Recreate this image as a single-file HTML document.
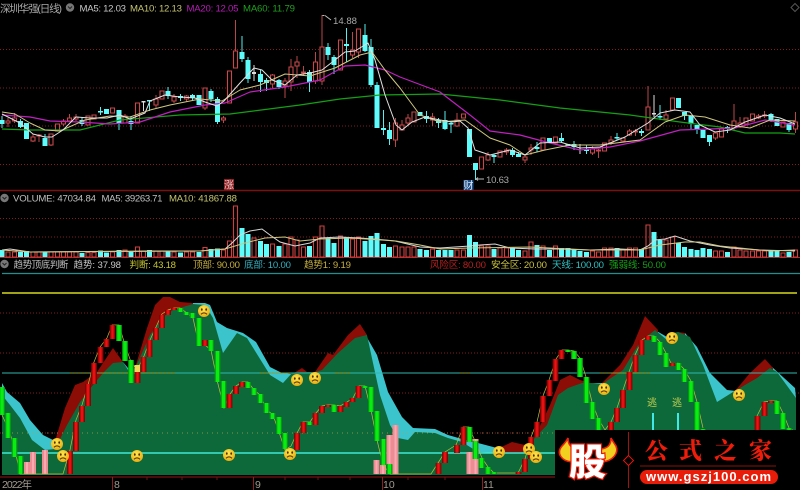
<!DOCTYPE html>
<html><head><meta charset="utf-8"><style>
html,body{margin:0;padding:0;background:#000;width:800px;height:490px;overflow:hidden}
svg{display:block;filter:blur(.35px)}
text{font-family:"Liberation Sans","Noto Sans CJK SC",sans-serif;font-size:9.6px}
</style></head><body>
<svg width="800" height="490" viewBox="0 0 800 490" xmlns="http://www.w3.org/2000/svg">
<defs>
<radialGradient id="fg" cx=".45" cy=".35" r=".7"><stop offset="0" stop-color="#ffe850"/><stop offset="1" stop-color="#e8a80c"/></radialGradient>
<g id="sad"><circle r="6" fill="url(#fg)"/><ellipse cx="-2.2" cy="-1.5" rx=".9" ry="1.3" fill="#4a2808"/><ellipse cx="2.2" cy="-1.5" rx=".9" ry="1.3" fill="#4a2808"/><path d="M-3 3.2Q0 .6 3 3.2" fill="none" stroke="#4a2808" stroke-width="1"/></g>
<path id="gb" d="M2 387V415M8 413V438M14.5 438V457M20.5 456V474M119 325V341M125 341V361M131 360V383M180.5 308V312M186.5 312V315M192.5 313V318M199 318V346M211 340V351M217.5 351V382M223.5 381V408M248 382V388M254 388V395M260.5 394V403M266.5 403V413M272.5 413V419M279 417V434M285 433V449M309.5 422V425M334 405V412M365 386V388M371 387V412M377 411V441M383.5 439V465M389.5 464V474M469.5 427V442M475.5 441V459M481.5 458V468M488 467V474M494 472V474M568 350V352M574 351V359M580 358V377M586.5 377V403M592.5 402V419M598.5 418V432M654 336V342M660 342V355M666 353V367M678.5 363V370M684.5 369V382M691 381V402M697 402V432M703 429V432M777 401V414M783 413V429M789 428V432"/>
<path id="rb" d="M70 451V474M76 422V451M82 406V422M88 384V406M94 363V384M100.5 347V363M106.5 339V347M112.5 325V339M137.5 372V383M143.5 357V372M149.5 340V357M156 328V340M162 315V328M168 310V315M174 308V310M205 340V346M229.5 394V408M236 386V394M242 382V387M297 433V450M303.5 422V433M315.5 413V425M322 406V413M328 405V407M340.5 406V412M346.5 402V407M352.5 398V402M358.5 386V398M438.5 463V474M445 452V463M457 445V453M463.5 427V445M518.5 472V474M525 459V472M531 437V459M537 422V437M543 396V422M549.5 380V396M555.5 359V381M561.5 350V359M611 422V432M617 408V422M623 390V408M629.5 372V390M635.5 355V372M641.5 340V355M648 336V340M672.5 363V366M757.5 416V432M764.5 402V416M771 401V403"/>
</defs>
<rect width="800" height="490" fill="#000"/>

<!-- grid -->
<g stroke="#8a1c1c" stroke-width="1" stroke-dasharray="1 2" fill="none">
<path d="M0 49.5H800M0 88H800M0 126H800M0 164.5H800M0 218.5H800M0 237H800M0 313H800M0 353H800M0 393H800M0 433H800"/>
</g>
<path d="M0 190.5H800" stroke="#7a1010" stroke-width="1.5"/>
<path d="M0 257.5H800" stroke="#c02020" stroke-width="1"/>

<!-- price wicks -->
<g fill="none" stroke-width="1">
<path stroke="#b84848" d="M8 118V127M14.5 113V123M33 134V142M39 134V142M51 134V146M63.5 119V126M69.5 114V122M76 114V121M125 114V123M156 95V108M174 94V103M186.5 95V102M205 88V110M223.5 116V123M235.5 20V68M272.5 74V88M285 78V98M291 59V91M297 56V78M303.5 66V75M315.5 52V84M322 15V85M352.5 32V58M358.5 29V58M395.5 118V147M402 120V130M408 114V125M432.5 113V126M457 113V127M488 152V161M506.5 148V155M525 154V163M531 144V155M592.5 146V155M598.5 149V158M611 136V145M629.5 129V136M635.5 129V136M648 86V130M666 110V120M715.5 133V140M734 104V130M740 117V128M758.5 114V119M764.5 111V118M795.5 112V133"/>
<path stroke="#55eeee" d="M2 116V128M20.5 119V128M45 134V146M82 117V126M100.5 107V115M119 110V130M131 116V130M149.5 100V111M168 87V99M180.5 94V101M192.5 94V101M211 89V102M217.5 97V124M242 36V62M248 57V83M260.5 70V92M266.5 78V91M279 79V89M309.5 70V92M328 43V60M334 55V74M346.5 28V62M365 24V52M371 39V87M377 82V128M383.5 110V135M389.5 122V145M426.5 111V123M438.5 118V128M445 111V130M451 121V133M475.5 170V180M494 154V163M512.5 148V157M518.5 152V157M537 142V152M561.5 133V142M574 141V150M586.5 145V154M617 133V140M641.5 129V136M660 105V120M684.5 112V120M691 116V129M697 125V134M709.5 135V146M727.5 126V133M771 113V122M789 123V132"/>
<path stroke="#dddddd" d="M143.5 101V111M254 65V81M580 144V154M654 95V117"/>
</g>
<!-- price red hollow bodies -->
<path fill="#000" stroke="#c8484c" stroke-width="1.1" d="M6 121h4V123h-4zM12.5 118h4V121h-4zM31 137h4V141h-4zM37 135h4V136h-4zM49 134h4V145h-4zM55.5 124h4V131h-4zM61.5 121h4V124h-4zM67.5 118h4V121h-4zM74 117h4V119h-4zM86 116h4V125h-4zM92 115h4V119h-4zM110.5 108h4V113h-4zM123 116h4V123h-4zM135.5 103h4V123h-4zM154 99h4V105h-4zM160 91h4V99h-4zM172 97h4V101h-4zM184.5 96h4V99h-4zM203 88h4V108h-4zM221.5 118h4V120h-4zM227.5 71h4V103h-4zM233.5 51h4V68h-4zM270.5 75h4V84h-4zM283 81h4V86h-4zM289 67h4V82h-4zM295 62h4V66h-4zM301.5 72h4V73h-4zM313.5 62h4V81h-4zM320 47h4V81h-4zM338.5 40h4V70h-4zM350.5 50h4V55h-4zM356.5 29h4V52h-4zM393.5 123h4V140h-4zM400 125h4V130h-4zM406 118h4V123h-4zM412 112h4V122h-4zM430.5 117h4V120h-4zM455 120h4V126h-4zM461.5 114h4V118h-4zM479.5 157h4V169h-4zM486 155h4V160h-4zM498 151h4V157h-4zM504.5 150h4V152h-4zM523 157h4V160h-4zM529 148h4V150h-4zM541 138h4V150h-4zM553.5 137h4V143h-4zM590.5 149h4V153h-4zM596.5 150h4V151h-4zM602.5 143h4V151h-4zM609 140h4V143h-4zM621 138h4V141h-4zM627.5 131h4V135h-4zM633.5 131h4V132h-4zM646 107h4V130h-4zM664 115h4V119h-4zM670.5 98h4V110h-4zM713.5 133h4V138h-4zM719.5 129h4V137h-4zM732 121h4V128h-4zM738 123h4V127h-4zM744 118h4V124h-4zM750.5 114h4V121h-4zM756.5 116h4V118h-4zM762.5 115h4V116h-4zM781 122h4V127h-4zM793.5 122h4V129h-4z"/>
<!-- price cyan bodies -->
<path fill="none" stroke="#5ffcfc" stroke-width="5" d="M2 120V124M20.5 121V127M26.5 123V139M45 138V146M82 120V124M100.5 111V112.5M106.5 109V114M119 110V123M131 121V124M149.5 100V101.5M168 91V96M180.5 96V98M192.5 95V98M199 95V105M211 91V99M217.5 99V122M242 52V59M248 60V79M260.5 74V82M266.5 80V83M279 80V87M309.5 72V82M328 47V55M334 57V65M346.5 44V46M365 35V51M371 47V85M377 85V128M383.5 128V130M389.5 130V139M420 112V116M426.5 116V119M438.5 120V123M445 120V129M451 123V124.5M469.5 129V157M475.5 163V170M494 155V157M512.5 150V155M518.5 154V157M537 147V149M549.5 138V142M561.5 138V141M568 144V146M574 144V147M586.5 149V151M617 137V138.5M641.5 131V133M660 116V117.5M678.5 98V108M684.5 112V116M691 116V124M697 125V129M703 130V138M709.5 135V142M727.5 127V129M771 114V120M777 119V126M789 123V130"/>
<path fill="none" stroke="#ddd" stroke-width="4" d="M143.5 101V102.5M254 72V74M654 113V114.5"/>

<!-- MA lines -->
<g fill="none" stroke-width="1" stroke-linejoin="round">
<path stroke="#14a014" stroke-width="1.2" d="M2 129L30 130 80 130 120 120 180 115 230 114 300 105 340 99 380 95 440 94 500 100 560 108 630 115 680 122 720 127 745 133 780 133 795 134"/>
<path stroke="#c020c0" stroke-width="1.2" d="M2 115L30 117 50 121 80 122 110 124 140 122 170 112 205 105 225 103 250 92 285 87 320 80 345 66 365 65 385 70 400 77 440 92 470 115 490 131 520 135 550 143 580 150 610 147 640 141 680 130 710 129 735 128 765 120 795 125"/>
<path stroke="#d0c880" d="M2 112L15 114 30 123 45 130 60 131 85 120 110 116 130 117 150 110 170 105 200 99 222 101 240 90 260 85 285 74 310 76 335 68 360 55 372 52 385 70 400 88 420 115 440 122 465 120 490 138 510 145 525 155 545 150 570 145 600 145 640 140 665 122 685 115 705 117 730 125 750 128 770 120 795 121"/>
<path stroke="#e0e0e0" d="M2 114L20 123 33 134 45 137 52 137 63 130 76 117 90 118 107 118 120 115 130 119 145 113 150 101 165 95 180 97 195 98 205 102 217 106 224 101 240 83 254 68 262 70 272 80 285 85 297 75 310 73 322 70 335 60 345 52 355 51 368 43 375 60 385 95 396 125 402 130 412 122 425 117 440 120 452 122 460 121 468 128 475 150 490 155 510 150 525 155 540 143 560 142 580 148 600 147 625 137 648 123 660 113 675 110 690 112 700 125 715 132 730 130 745 122 765 115 780 118 795 124"/>
</g>

<!-- price labels -->
<path d="M322.5 15.5h2M325 15.5L331 20" stroke="#bbb" stroke-width="1" fill="none"/>
<text x="333" y="24" fill="#a8a8a8" textLength="24">14.88</text>
<path d="M476 179H484M476 179l2-1.5M476 179l2 1.5" stroke="#bbb" stroke-width="1" fill="none"/>
<text x="486" y="183" fill="#a8a8a8" textLength="23">10.63</text>
<rect x="224" y="179" width="10" height="11" fill="#8c1f22"/>
<text x="224" y="188.5" fill="#e8c8c8" style="font-size:10px">涨</text>
<rect x="463.5" y="180" width="10" height="10" fill="#1d4f8a"/>
<text x="463.5" y="189" fill="#dde8f4" style="font-size:10px">财</text>
<path d="M795 3.5L799 7.5 795 11.5 791 7.5z" fill="none" stroke="#555" stroke-width="1"/>

<!-- title -->
<text x="0" y="12" fill="#a9a9a9" textLength="62" style="font-size:10.5px">深圳华强(日线)</text>
<circle cx="70" cy="7.5" r="4.2" fill="#777"/><path d="M68 6.5l2 2 2-2" fill="none" stroke="#222" stroke-width="1"/>
<text x="79.5" y="11.5" fill="#c8c8c8" textLength="46.5">MA5: 12.03</text>
<text x="130" y="11.5" fill="#c4c470" textLength="52">MA10: 12.13</text>
<text x="186.5" y="11.5" fill="#b81cb8" textLength="52">MA20: 12.05</text>
<text x="243" y="11.5" fill="#1fa01f" textLength="52">MA60: 11.79</text>

<!-- volume -->
<circle cx="4.5" cy="198" r="4.2" fill="#777"/><path d="M2.5 197l2 2 2-2" fill="none" stroke="#222" stroke-width="1"/>
<text x="13" y="201.5" fill="#c0c0c0" textLength="83">VOLUME: 47034.84</text>
<text x="101.5" y="201.5" fill="#c0c0c0" textLength="61">MA5: 39263.71</text>
<text x="169" y="201.5" fill="#c4c470" textLength="68">MA10: 41867.88</text>

<path fill="none" stroke="#d04040" stroke-width="1.1" d="M6 252h4V257h-4zM12.5 252h4V257h-4zM31 252h4V257h-4zM37 252h4V257h-4zM49 252h4V257h-4zM55.5 252h4V257h-4zM61.5 252h4V257h-4zM67.5 252h4V257h-4zM74 252h4V257h-4zM86 252.5h4V257h-4zM92 252.5h4V257h-4zM110.5 252h4V257h-4zM123 250h4V257h-4zM135.5 247h4V257h-4zM141.5 251h4V257h-4zM154 251h4V257h-4zM160 251h4V257h-4zM172 252h4V257h-4zM184.5 252h4V257h-4zM190.5 252h4V257h-4zM203 247.5h4V257h-4zM221.5 250h4V257h-4zM227.5 241h4V257h-4zM233.5 206h4V257h-4zM252 238h4V257h-4zM270.5 244h4V257h-4zM283 244h4V257h-4zM289 237h4V257h-4zM295 240h4V257h-4zM301.5 247h4V257h-4zM313.5 237h4V257h-4zM320 226h4V257h-4zM338.5 236h4V257h-4zM350.5 239h4V257h-4zM356.5 237h4V257h-4zM393.5 246h4V257h-4zM400 247h4V257h-4zM406 247h4V257h-4zM412 247h4V257h-4zM430.5 249h4V257h-4zM455 250h4V257h-4zM461.5 250h4V257h-4zM479.5 246h4V257h-4zM486 246h4V257h-4zM498 248h4V257h-4zM504.5 248h4V257h-4zM523 251h4V257h-4zM529 242h4V257h-4zM541 246h4V257h-4zM553.5 246h4V257h-4zM590.5 251h4V257h-4zM596.5 252h4V257h-4zM602.5 248h4V257h-4zM609 248h4V257h-4zM621 250h4V257h-4zM627.5 248h4V257h-4zM633.5 248h4V257h-4zM646 225h4V257h-4zM664 240h4V257h-4zM670.5 237h4V257h-4zM713.5 251h4V257h-4zM719.5 251h4V257h-4zM732 247h4V257h-4zM738 250h4V257h-4zM744 251h4V257h-4zM750.5 251h4V257h-4zM756.5 251h4V257h-4zM762.5 251h4V257h-4zM781 253h4V257h-4zM793.5 250h4V257h-4z"/>
<path fill="none" stroke="#5ffcfc" stroke-width="5" d="M2 250V257M20.5 252V257M26.5 251V257M45 252V257M82 253V257M100.5 250.5V257M106.5 252.5V257M119 250V257M131 251V257M149.5 250V257M168 251V257M180.5 252.5V257M199 252V257M211 249V257M217.5 248.5V257M242 228V257M248 234V257M260.5 241V257M266.5 244V257M279 246V257M309.5 246V257M328 238V257M334 243V257M346.5 237V257M365 241V257M371 236V257M377 233V257M383.5 244V257M389.5 247V257M420 249V257M426.5 250V257M438.5 250V257M445 250V257M451 250V257M469.5 235V257M475.5 242V257M494 249V257M512.5 248V257M518.5 250V257M537 245V257M549.5 250V257M561.5 248V257M568 248V257M574 249V257M580 251V257M586.5 252V257M617 248V257M641.5 249V257M654 232V257M660 240V257M678.5 243V257M684.5 247V257M691 249V257M697 250V257M703 248V257M709.5 249V257M727.5 252V257M771 250V257M777 250V257M789 252V257"/>
<g fill="none" stroke-width="1">
<path stroke="#d8d8d8" d="M2 250L10 249 30 252 150 251 200 251 225 249 232 243 240 235 250 231 262 229 270 235 280 242 295 246 310 243 320 238 340 237 360 238 385 240 395 241 420 247 440 248 470 246 480 245 495 244 510 248 535 249 560 249 590 250 620 249 640 250 648 246 655 240 665 239 675 236 690 241 710 245 730 248 760 250 795 251"/>
<path stroke="#d0c880" d="M2 250L30 252 200 251 225 249 245 243 265 238 285 237 300 241 320 239 350 238 396 241 420 245 440 249 470 248 530 247 590 250 640 250 660 245 685 242 700 242 720 246 740 248 770 251 795 250"/>
</g>

<!-- indicator title -->
<circle cx="4.5" cy="264" r="4.2" fill="#777"/><path d="M2.5 263l2 2 2-2" fill="none" stroke="#222" stroke-width="1"/>
<text x="13.5" y="268" fill="#c0c0c0" textLength="55">趋势顶底判断</text>
<text x="73.5" y="268" fill="#c8c8c8" textLength="47.5">趋势: 37.98</text>
<text x="129.5" y="268" fill="#c4c430" textLength="46.5">判断: 43.18</text>
<text x="193" y="268" fill="#c8b040" textLength="47">顶部: 90.00</text>
<text x="244" y="268" fill="#34b0c0" textLength="47">底部: 10.00</text>
<text x="304" y="268" fill="#c8b040" textLength="47">趋势1: 9.19</text>
<text x="430" y="268" fill="#b82020" textLength="56">风险区: 80.00</text>
<text x="491" y="268" fill="#c8c040" textLength="56">安全区: 20.00</text>
<text x="552" y="268" fill="#30c0c0" textLength="52">天线: 100.00</text>
<text x="609" y="268" fill="#18a018" textLength="57">强弱线: 50.00</text>

<path d="M2 273.5H800" stroke="#1f8f8f" stroke-width="1.2"/>
<path d="M2 293H797" stroke="#d8d820" stroke-width="1.4"/>

<!-- bands -->
<g fill="#3cc4cc">
<path d="M2 383L7 392 20 403 30 420 43 435 55 441 57 445V475H2z"/>
<path d="M123 362L128 368 132 372V475H123z"/>
<path d="M193 303L205 303 210 305 217 322 227 328 243 333 256 342 270 367 282 373 292 374V475H193z"/>
<path d="M365 334L377 355 388 392 402 417 413 428 435 429 448 435 462 439 478 443 497 448V475H365z"/>
<path d="M590 383L602 383V475H590z"/>
<path d="M655 330L667 337 673 335V475H655z"/>
<path d="M685 333L697 347 710 373 727 390 736 391V475H685z"/>
<path d="M772 367L795 388 796 398V475H772z"/>
</g>
<g fill="#8c0c06">
<path d="M55 441L65 408 75 385 83 382 97 372 113 348 123 362V475H55z"/>
<path d="M135 368L147 328 155 305 163 297 170 297 180 302 193 303V475H135z"/>
<path d="M294 373L302 368 307 372V475H294z"/>
<path d="M315 372L328 353 333 355 348 335 360 324 367 335V475H315z"/>
<path d="M497 449L512 442 525 445 530 442 537 432 550 405 560 380 570 375 580 380 590 383V475H497z"/>
<path d="M602 383L620 365 633 345 645 316 658 330V475H602z"/>
<path d="M670 336L678 332 685 333V475H670z"/>
<path d="M735 391L750 373 765 359 773 368V475H735z"/>
</g>
<path fill="#0e693a" d="M2 395L10 405 20 418 32 440 45 450 55 449 57 445 67 425 80 402 93 385 103 373 113 363 123 362 128 370 132 372 138 362 150 335 163 317 173 310 193 304 205 305 213 318 223 353 237 333 247 338 270 375 283 383 292 373 300 372 315 372 322 370 338 353 355 338 367 335 373 363 380 395 390 425 398 438 408 440 415 432 435 433 448 438 462 442 478 452 495 453 522 453 530 443 547 425 558 395 568 388 582 383 593 383 602 384 623 370 640 342 655 330 667 340 673 333 678 332 690 337 703 365 717 402 733 392 757 378 770 368 777 372 796 398V475H2z"/>

<!-- horizontal levels -->
<path d="M2 373H797" stroke="#2fb8b0" stroke-width="1"/>
<path d="M70 373H135M140 373H175M260 373H290M335 373H350M460 373H470M600 373H650" stroke="#a09820" stroke-width="1" stroke-dasharray="3 1"/>
<path d="M2 453H797" stroke="#3ee8d8" stroke-width="1.5"/>
<path d="M2 433H797" stroke="#b0a050" stroke-width=".7" stroke-dasharray="1 4"/>

<!-- pink bars -->
<path fill="none" stroke="#ee8c94" stroke-width="6" d="M27 462V474M33 452V474M45 450V474M376.5 460V474M383 465V474M389.5 435V465M395.5 425V474M469.5 452V474M475.5 439V474"/>
<path fill="none" stroke="#f8aab0" stroke-width="2" d="M27 462V474M33 452V474M45 450V474M376.5 460V474M383 465V474M389.5 435V465M395.5 425V474M469.5 452V474M475.5 439V474"/>

<!-- thin yellow K line -->
<path fill="none" stroke="#b8c040" stroke-width=".7" d="M2 415L9 430 15 450 20 474H63L70 450 76 420 82 405 88 385 94 362 100 347 107 338 112 325 119 325 125 345 131 362 137 370 144 356 150 340 156 327 162 314 168 310 174 308 180 308 187 313 193 318 199 345 205 345 211 350 217 380 224 408 230 394 236 386 242 382 248 382 254 390 260 395 267 410 273 415 279 432 285 450 291 446 297 433 303 422 310 422 316 413 322 406 328 405 334 405 340 406 347 402 353 398 359 386 365 386 371 410 377 440 383 465 390 474H431L438 463 445 452 456 445 463 427 469 427 475 441 482 458 488 467 494 473H518L525 459 531 437 537 422 543 396 549 380 556 359 562 350 568 350 574 351 580 358 586 377 592 402 598 418 605 430 611 422 617 408 623 390 629 372 635 355 642 340 648 336 654 336 660 342 666 353 672 365 678 363 684 369 691 381 697 402 703 428M757 416L764 402 771 401 777 401 783 413 789 428 796 432"/>

<!-- K bars -->
<use href="#gb" fill="none" stroke="#089a14" stroke-width="5.8"/>
<use href="#gb" fill="none" stroke="#08ee10" stroke-width="3.4"/>
<use href="#rb" fill="none" stroke="#7e0404" stroke-width="5.8"/>
<use href="#rb" fill="none" stroke="#c00a0a" stroke-width="3.8"/>
<use href="#rb" fill="none" stroke="#ec1212" stroke-width="1.8"/>

<!-- escape marks -->
<path d="M653 413V431M678 413V431" stroke="#40e8e8" stroke-width="2"/>
<text x="647" y="406" fill="#c0cc50" style="font-size:10px">逃</text>
<text x="672" y="406" fill="#c0cc50" style="font-size:10px">逃</text>
<rect x="134.5" y="365" width="5.5" height="7" fill="#f0d858"/>

<!-- faces -->
<use href="#sad" x="57" y="444"/>
<use href="#sad" x="63" y="456"/>
<use href="#sad" x="137" y="456"/>
<use href="#sad" x="229" y="455"/>
<use href="#sad" x="204" y="311"/>
<use href="#sad" x="297" y="380"/>
<use href="#sad" x="315" y="378"/>
<use href="#sad" x="290" y="454"/>
<use href="#sad" x="499" y="452"/>
<use href="#sad" x="529" y="449"/>
<use href="#sad" x="536" y="457"/>
<use href="#sad" x="604" y="389"/>
<use href="#sad" x="672" y="338"/>
<use href="#sad" x="739" y="395"/>

<!-- bottom axis -->
<path d="M0 477H800" stroke="#7a1010" stroke-width="1.2"/>
<path d="M112.5 477V490M253.5 477V490M382.5 477V490M482.5 477V490" stroke="#8a2020" stroke-width="1"/>
<path d="M147 477V480M182 477V480M217 477V480M285 477V480M318 477V480M350 477V480M408 477V480M445 477V480" stroke="#6a1818" stroke-width="1"/>
<text x="2" y="488" fill="#a09a90" textLength="30" style="font-size:10.5px">2022年</text>
<text x="114" y="488" fill="#a09a90" style="font-size:10.5px">8</text>
<text x="255" y="488" fill="#a09a90" style="font-size:10.5px">9</text>
<text x="383" y="488" fill="#a09a90" style="font-size:10.5px">10</text>
<text x="483" y="488" fill="#a09a90" style="font-size:10.5px">11</text>

<!-- logo -->
<rect x="555" y="430" width="245" height="60" fill="#000"/>
<path d="M572 462C561 461 556 453 562 446 565 443 567 440 568 438 568 445 571 448 578 449z" fill="#f2d020" stroke="#f02010" stroke-width="1.6"/>
<path d="M602 462C613 461 619 453 616 446 614 443 612 440 611 438 611 445 608 448 601 449z" fill="#f2d020" stroke="#f02010" stroke-width="1.6"/>
<text x="569" y="475" fill="#fff" stroke="#e81808" stroke-width="2.4" paint-order="stroke" style="font-size:37px;font-family:'Noto Sans CJK SC',sans-serif;font-weight:900">股</text>
<path d="M628.5 432V488" stroke="#a01410" stroke-width="1"/>
<path d="M628.5 455.5L633.5 460.5 628.5 465.5 623.5 460.5z" fill="#000" stroke="#e01810" stroke-width="1"/>
<text x="645 679 714 749" y="458.5" fill="#f01c0a" style="font-size:23px;font-family:'Noto Serif CJK SC',serif;font-weight:900">公式之家</text>
<path d="M640 466H776" stroke="#701008" stroke-width="1.2"/>
<rect x="640" y="470" width="138" height="14" rx="7" fill="#e81c08"/>
<text x="646" y="481" fill="#fff" textLength="125" style="font-size:13px;font-weight:700">www.gszj100.com</text>
</svg>
</body></html>
